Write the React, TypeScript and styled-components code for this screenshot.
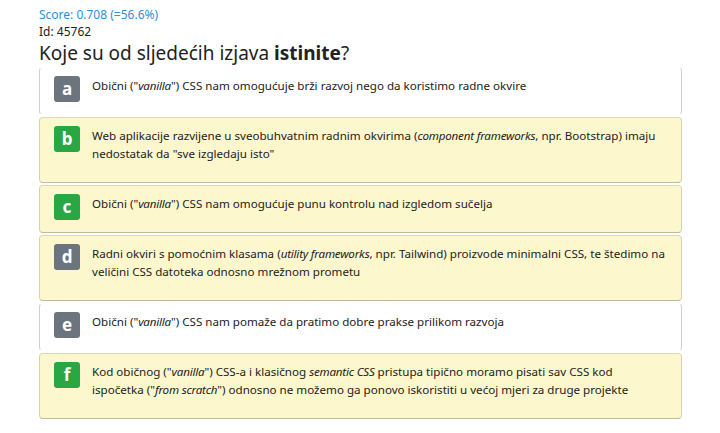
import React from 'react'
import styled, { createGlobalStyle } from 'styled-components'

const GlobalStyle = createGlobalStyle`
  html, body {
    margin: 0;
    padding: 0;
    background: #ffffff;
  }
  body {
    font-family: 'Noto Sans', 'Liberation Sans', sans-serif;
    color: #212529;
  }
`

const Page = styled.div`
  padding: 7px 0 0 39px;
  width: 643px;
`

const Score = styled.div`
  font-size: 12px;
  line-height: 16px;
  color: #2f8fd8;
`

const Id = styled.div`
  font-size: 12px;
  line-height: 16px;
  margin-top: 1px;
  color: #222;
`

const Question = styled.h2`
  margin: 0 0 1px 0;
  font-size: 19px;
  line-height: 26px;
  font-weight: 400;
  color: #222;

  b {
    font-weight: 700;
  }
`

const List = styled.div`
  display: flex;
  flex-direction: column;
  gap: 2px;
`

const Card = styled.div<{ $marked: boolean }>`
  display: flex;
  align-items: flex-start;
  gap: 12px;
  padding: 8px 12px 12px 14px;
  border-radius: 4px;
  background: ${(p) => (p.$marked ? '#fdf7cd' : '#ffffff')};
  border: 1px solid ${(p) => (p.$marked ? '#ddd9b6' : '#ffffff')};
  border-left-color: ${(p) => (p.$marked ? '#d6d2b0' : '#cfcfcf')};
  border-right-color: ${(p) => (p.$marked ? '#d6d2b0' : '#cfcfcf')};
  border-bottom-color: ${(p) => (p.$marked ? '#bfbb9c' : '#ffffff')};
`

const Badge = styled.div<{ $correct: boolean }>`
  flex: none;
  width: 26px;
  height: 26px;
  border-radius: 3px;
  background: ${(p) => (p.$correct ? '#2aa745' : '#6c747d')};
  color: #fff;
  font-size: 17px;
  font-weight: 700;
  display: flex;
  align-items: center;
  justify-content: center;
  line-height: 1;
  padding-bottom: 2px;
  box-sizing: border-box;
`

const Text = styled.div`
  font-size: 11.6px;
  line-height: 18px;
  padding: 1px 0 7px;
  color: #222;

  i {
    letter-spacing: -0.2px;
  }
`

const Line = styled.div`
  white-space: nowrap;
`

type Option = {
  key: string
  correct: boolean
  marked: boolean
  lines: React.ReactNode[]
}

const options: Option[] = [
  {
    key: 'a',
    correct: false,
    marked: false,
    lines: [<>Obični ("<i>vanilla</i>") CSS nam omogućuje brži razvoj nego da koristimo radne okvire</>],
  },
  {
    key: 'b',
    correct: true,
    marked: true,
    lines: [
      <>
        Web aplikacije razvijene u sveobuhvatnim radnim okvirima (<i>component frameworks</i>, npr.
        Bootstrap) imaju
      </>,
      <>nedostatak da "sve izgledaju isto"</>,
    ],
  },
  {
    key: 'c',
    correct: true,
    marked: true,
    lines: [<>Obični ("<i>vanilla</i>") CSS nam omogućuje punu kontrolu nad izgledom sučelja</>],
  },
  {
    key: 'd',
    correct: false,
    marked: true,
    lines: [
      <>
        Radni okviri s pomoćnim klasama (<i>utility frameworks</i>, npr. Tailwind) proizvode
        minimalni CSS, te štedimo na
      </>,
      <>veličini CSS datoteka odnosno mrežnom prometu</>,
    ],
  },
  {
    key: 'e',
    correct: false,
    marked: false,
    lines: [<>Obični ("<i>vanilla</i>") CSS nam pomaže da pratimo dobre prakse prilikom razvoja</>],
  },
  {
    key: 'f',
    correct: true,
    marked: true,
    lines: [
      <>
        Kod običnog ("<i>vanilla</i>") CSS-a i klasičnog <i>semantic CSS</i> pristupa tipično
        moramo pisati sav CSS kod
      </>,
      <>
        ispočetka ("<i>from scratch</i>") odnosno ne možemo ga ponovo iskoristiti u većoj mjeri za
        druge projekte
      </>,
    ],
  },
]

export default function App(): React.ReactElement {
  return (
    <>
      <GlobalStyle />
      <Page>
        <Score>Score: 0.708 (=56.6%)</Score>
        <Id>Id: 45762</Id>
        <Question>
          Koje su od sljedećih izjava <b>istinite</b>?
        </Question>
        <List>
          {options.map((o) => (
            <Card key={o.key} $marked={o.marked}>
              <Badge $correct={o.correct}>{o.key}</Badge>
              <Text>
                {o.lines.map((l, i) => (
                  <Line key={i}>{l}</Line>
                ))}
              </Text>
            </Card>
          ))}
        </List>
      </Page>
    </>
  )
}
